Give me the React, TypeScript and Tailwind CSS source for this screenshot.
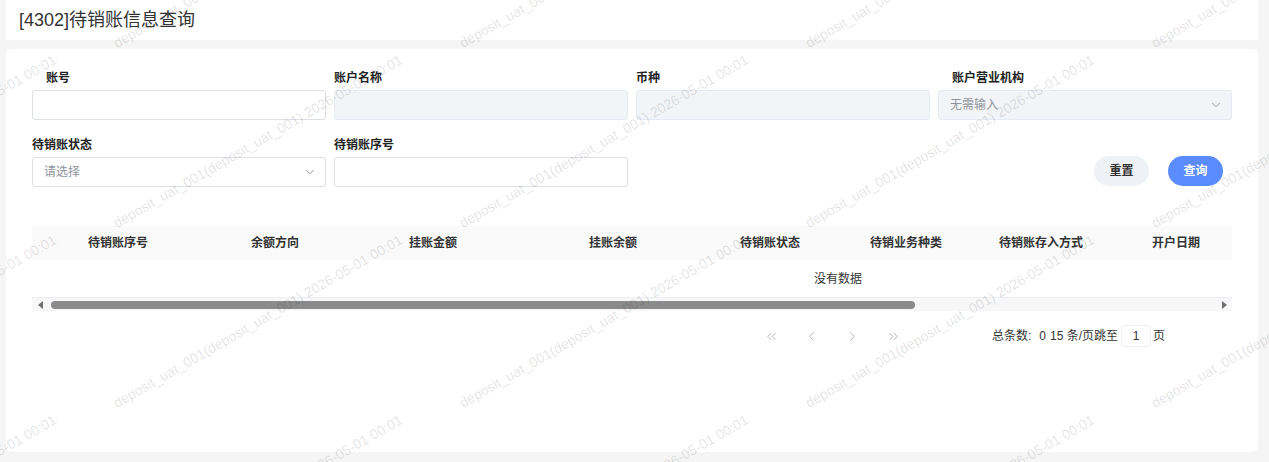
import { ChevronDown, ChevronLeft, ChevronRight, ChevronsLeft, ChevronsRight } from 'lucide-react';

// 列宽按截图中表头文字的中心位置推算
const columns = [
  { title: '待销账序号', width: 'w-[172px]' },
  { title: '余额方向', width: 'w-[142px]' },
  { title: '挂账金额', width: 'w-[174px]' },
  { title: '挂账余额', width: 'w-[186px]' },
  { title: '待销账状态', width: 'w-[128px]' },
  { title: '待销业务种类', width: 'w-[144px]' },
  { title: '待销账存入方式', width: 'w-[126px]' },
  { title: '开户日期', width: 'w-[144px]' },
  { title: '操作柜员', width: 'w-[140px]' },
  { title: '备注', width: 'w-[120px]' },
  { title: '操作', width: 'w-[132px]' },
];

const watermarkText = 'deposit_uat_001(deposit_uat_001) 2026-05-01 00:01';
const wmCols = [-228, 118, 464, 810, 1156];
const wmRows = [50, 230, 410, 590];

function Field({
  label,
  indent,
  children,
}: {
  label: string;
  indent?: boolean;
  children: React.ReactNode;
}) {
  return (
    <div className="flex flex-col">
      <div className={`h-[20px] leading-[20px] mb-[2px] text-[12px] font-bold text-[#222] ${indent ? 'pl-[14px]' : ''}`}>
        {label}
      </div>
      {children}
    </div>
  );
}

function TextInput({ disabled }: { disabled?: boolean }) {
  return (
    <div
      className={
        disabled
          ? 'h-[30px] rounded-[3px] border border-[#e6ebf3] bg-[#f3f4f7]'
          : 'h-[30px] rounded-[3px] border border-[#dcdfe6] bg-white'
      }
    />
  );
}

function SelectInput({ placeholder, disabled }: { placeholder: string; disabled?: boolean }) {
  return (
    <div
      className={`h-[30px] rounded-[3px] border flex items-center justify-between pl-[11px] pr-[8px] ${
        disabled ? 'border-[#e6ebf3] bg-[#f3f4f7]' : 'border-[#dcdfe6] bg-white'
      }`}
    >
      <span className="text-[12px] text-[#8f949c]">{placeholder}</span>
      <ChevronDown size={14} strokeWidth={1.6} className="text-[#8a8f98]" />
    </div>
  );
}

export default function App() {
  return (
    <div className="relative h-[462px] overflow-hidden bg-[#f5f5f5] pl-[6px] pr-[11px] font-['Liberation_Sans','Noto_Sans_CJK_SC',sans-serif]">
      {/* 标题 */}
      <div className="h-[40px] bg-white flex items-center pl-[13px] text-[18px] text-[#333]">
        [4302]待销账信息查询
      </div>

      {/* 查询条件 + 列表 */}
      <div className="mt-[9px] h-[403px] rounded-md bg-white px-[26px] pt-[19px]">
        <div className="grid grid-cols-4 gap-x-2 gap-y-[15px]">
          <Field label="账号" indent>
            <TextInput />
          </Field>
          <Field label="账户名称">
            <TextInput disabled />
          </Field>
          <Field label="币种">
            <TextInput disabled />
          </Field>
          <Field label="账户营业机构" indent>
            <SelectInput placeholder="无需输入" disabled />
          </Field>
          <Field label="待销账状态">
            <SelectInput placeholder="请选择" />
          </Field>
          <Field label="待销账序号">
            <TextInput />
          </Field>
          <div className="col-span-2 flex items-end justify-end gap-[19px] pr-[9px] pb-[1px]">
            <button className="h-[30px] w-[55px] rounded-full bg-[#eef1f6] text-[12px] font-bold text-[#333]">
              重置
            </button>
            <button className="h-[30px] w-[55px] rounded-full bg-[#5a8cff] text-[12px] font-bold text-white">
              查询
            </button>
          </div>
        </div>

        {/* 表格 */}
        <div className="mt-[39px] w-full overflow-hidden">
          <div className="w-[1612px]">
            <div className="flex h-[34px] items-center bg-[#fafafa]">
              {columns.map((c) => (
                <div key={c.title} className={`${c.width} shrink-0 text-center text-[12px] font-bold text-[#333]`}>
                  {c.title}
                </div>
              ))}
            </div>
            <div className="flex h-[38px] items-center justify-center border-b border-[#ebeef5] text-[12px] text-[#333]">
              没有数据
            </div>
          </div>
        </div>

        {/* 横向滚动条 */}
        <div className="flex h-[13px] items-center bg-[#f7f7f7]">
          <div className="flex w-[16px] justify-center">
            <div className="h-0 w-0 border-y-[4px] border-r-[5px] border-y-transparent border-r-[#6f6f6f]" />
          </div>
          <div className="h-[8px] w-[864px] rounded-full bg-[#8b8b8b] ml-[3px]" />
          <div className="flex-1" />
          <div className="flex w-[16px] justify-center">
            <div className="h-0 w-0 border-y-[4px] border-l-[5px] border-y-transparent border-l-[#6f6f6f]" />
          </div>
        </div>

        {/* 分页 */}
        <div className="mt-[14px] flex h-[22px] items-center pl-[719px] text-[12px] text-[#333]">
          <div className="flex w-[40px] justify-center text-[#a3a7ae]">
            <ChevronsLeft size={15} strokeWidth={1.4} />
          </div>
          <div className="flex w-[40px] justify-center text-[#a3a7ae]">
            <ChevronLeft size={15} strokeWidth={1.4} />
          </div>
          <div className="flex w-[42px] justify-center text-[#a3a7ae]">
            <ChevronRight size={15} strokeWidth={1.4} />
          </div>
          <div className="flex w-[40px] justify-center text-[#a3a7ae]">
            <ChevronsRight size={15} strokeWidth={1.4} />
          </div>
          <span className="ml-[79px]">总条数:</span>
          <span className="ml-[8px]">0</span>
          <span className="ml-[4px]">15 条/页跳至</span>
          <div className="ml-[3px] flex h-[22px] w-[30px] items-center justify-center rounded-sm border border-[#f0f0f0]">
            1
          </div>
          <span className="ml-[2px]">页</span>
        </div>
      </div>

      {/* 水印 */}
      <div className="pointer-events-none absolute inset-0 overflow-hidden">
        {wmRows.map((y) =>
          wmCols.map((x) => (
            <span
              key={`${x}-${y}`}
              className="absolute origin-bottom-left -rotate-30 whitespace-nowrap text-[14px] leading-[14px] text-black/[0.12]"
              style={{ left: x, top: y - 14 }}
            >
              {watermarkText}
            </span>
          ))
        )}
      </div>
    </div>
  );
}
